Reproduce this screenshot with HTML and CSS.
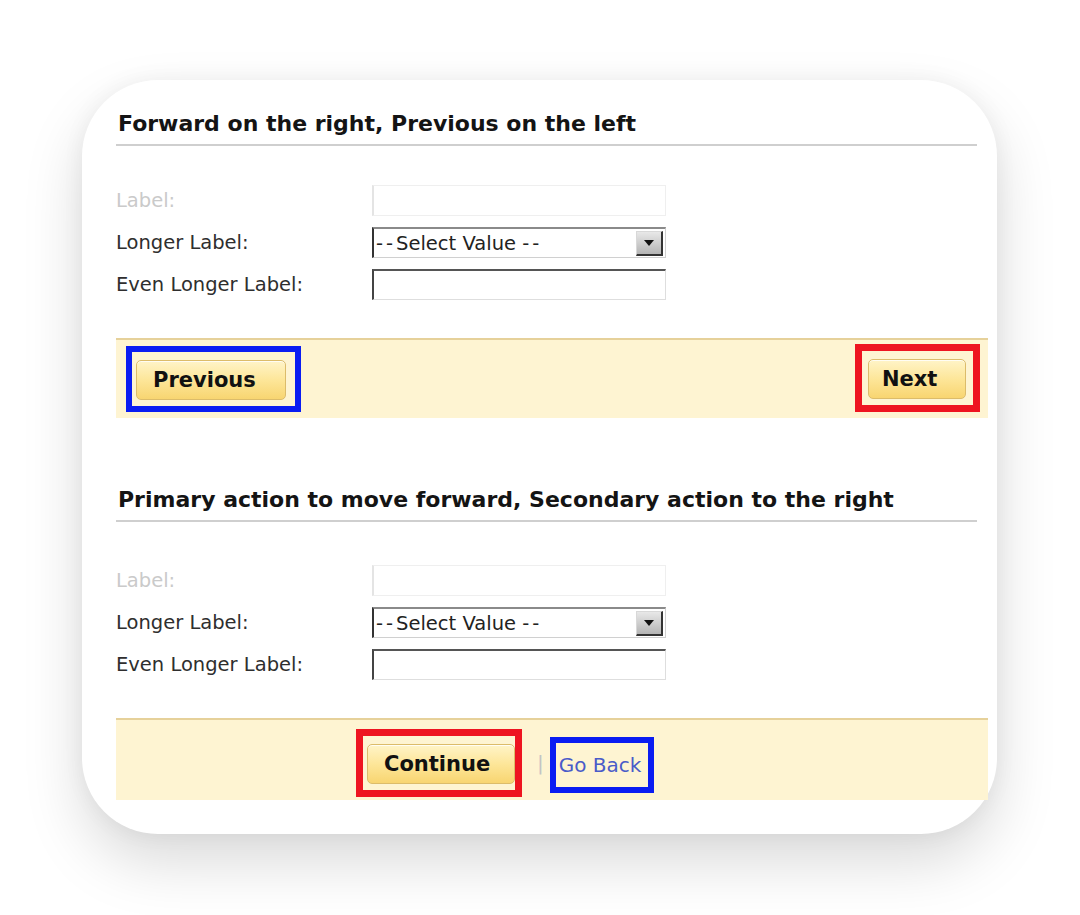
FILE: index.html
```html
<!DOCTYPE html>
<html lang="en">
<head>
<meta charset="utf-8">
<title>Button placement</title>
<link rel="stylesheet" href="styles.css">
</head>
<body>
<div class="page">
<div class="card">
  <section class="section">
    <h2 class="heading">Forward on the right, Previous on the left</h2>
    <div class="form form-first">
      <div class="row">
        <span class="label label-disabled">Label:</span>
        <span class="input input-disabled"></span>
      </div>
      <div class="row">
        <span class="label">Longer Label:</span>
        <span class="select"><span class="select-text"><span class="dash">--</span>Select Value <span class="dash">--</span></span><span class="select-arrow"><svg width="12" height="8" viewBox="0 0 12 8"><path d="M1 1 L11 1 L6 7 Z" fill="#111"/></svg></span></span>
      </div>
      <div class="row">
        <span class="label">Even Longer Label:</span>
        <span class="input"></span>
      </div>
    </div>
    <div class="band band-split">
      <span class="mark mark-blue mark-prev"><button class="btn btn-prev">Previous</button></span>
      <span class="mark mark-red mark-next"><button class="btn btn-next">Next</button></span>
    </div>
  </section>

  <section class="section section-second">
    <h2 class="heading">Primary action to move forward, Secondary action to the right</h2>
    <div class="form form-second">
      <div class="row">
        <span class="label label-disabled">Label:</span>
        <span class="input input-disabled"></span>
      </div>
      <div class="row">
        <span class="label">Longer Label:</span>
        <span class="select"><span class="select-text"><span class="dash">--</span>Select Value <span class="dash">--</span></span><span class="select-arrow"><svg width="12" height="8" viewBox="0 0 12 8"><path d="M1 1 L11 1 L6 7 Z" fill="#111"/></svg></span></span>
      </div>
      <div class="row">
        <span class="label">Even Longer Label:</span>
        <span class="input"></span>
      </div>
    </div>
    <div class="band band-inline">
      <span class="mark mark-red mark-continue"><button class="btn btn-continue">Continue</button></span>
      <span class="sep">|</span>
      <span class="mark mark-blue mark-back"><a class="link" href="#">Go Back</a></span>
    </div>
  </section>
</div>
</div>
</body>
</html>
```

FILE: styles.css
```css
html, body {
  margin: 0;
  padding: 0;
  background: #ffffff;
}

body {
  font-family: "DejaVu Sans", Verdana, sans-serif;
  color: #222;
}

.page {
  min-height: 915px;
  box-sizing: border-box;
  padding: 80px 0 80px 82px;
}

.card {
  width: 915px;
  padding: 31px 9px 34px 34px;
  box-sizing: border-box;
  background: #fff;
  border-radius: 76px;
  box-shadow: 0 28px 60px rgba(0, 0, 0, 0.15), 0 0 22px rgba(0, 0, 0, 0.05);
}

.heading {
  margin: 0 11px 0 0;
  padding: 0 0 7px 2px;
  font-size: 22px;
  line-height: 26px;
  font-weight: bold;
  color: #141414;
  border-bottom: 2px solid #cfcfcf;
}

.section-second {
  margin-top: 69px;
}

.form {
  display: flex;
  flex-direction: column;
  gap: 11px;
}

.form-first {
  margin-top: 39px;
}

.form-second {
  margin-top: 43px;
}

.row {
  display: flex;
  align-items: center;
  height: 31px;
}

.label {
  width: 256px;
  flex: none;
  font-size: 19.5px;
  color: #2e2e2e;
}

.label-disabled {
  color: #cacaca;
}

.input {
  width: 294px;
  height: 31px;
  box-sizing: border-box;
  background: #fff;
  border-top: 2px solid #555;
  border-left: 2px solid #444;
  border-right: 1px solid #dedede;
  border-bottom: 1px solid #dedede;
}

.input-disabled {
  border: 1px solid #efefef;
  border-left: 2px solid #e4e4e4;
}

.select {
  width: 294px;
  height: 31px;
  box-sizing: border-box;
  display: flex;
  align-items: center;
  justify-content: space-between;
  border-top: 2px solid #8a8a8a;
  border-left: 2px solid #333;
  border-right: 1px solid #d0d0d0;
  border-bottom: 1px solid #d0d0d0;
  padding: 0 2px 0 2px;
}

.select-text {
  font-size: 19.5px;
  color: #222;
}

.dash {
  letter-spacing: 3px;
}

.select-arrow {
  width: 27px;
  height: 25px;
  box-sizing: border-box;
  display: flex;
  align-items: center;
  justify-content: center;
  background: linear-gradient(#e8e8e8, #b4b4b4);
  border-top: 1px solid #d8d8d8;
  border-left: 1px solid #d8d8d8;
  border-right: 2px solid #333;
  border-bottom: 2px solid #333;
}

.band {
  margin-top: 38px;
  background: #fef4d2;
  border-top: 2px solid #e6d19a;
  display: flex;
  align-items: center;
}

.band-split {
  height: 80px;
  box-sizing: border-box;
  justify-content: space-between;
  padding: 0 8px 0 10px;
}

.band-inline {
  height: 82px;
  box-sizing: border-box;
  padding: 6px 0 0 240px;
}

.mark {
  display: inline-flex;
  align-items: center;
  box-sizing: border-box;
}

.mark-blue {
  border: 6px solid #0a1cf2;
}

.mark-red {
  border: 7px solid #ee1420;
}

.mark-prev {
  width: 175px;
  height: 66px;
  padding: 2px 0 0 4px;
}

.mark-next {
  width: 125px;
  height: 68px;
  padding: 2px 0 0 6px;
  margin-bottom: 2px;
}

.mark-continue {
  width: 166px;
  height: 68px;
  padding: 2px 0 0 4px;
}

.mark-back {
  width: 104px;
  height: 56px;
  padding: 0 0 0 3px;
  margin-top: 4px;
}

.btn {
  height: 40px;
  box-sizing: border-box;
  padding: 0 24px 0 16px;
  font-family: "DejaVu Sans", Verdana, sans-serif;
  font-size: 21px;
  font-weight: bold;
  color: #111;
  background: linear-gradient(#fff4c8 0%, #fde699 50%, #f8d571 100%);
  border: 1px solid #dcbc6a;
  border-radius: 5px;
  box-shadow: inset 0 1px 0 rgba(255, 255, 255, 0.8);
  text-align: left;
}

.btn-prev {
  width: 150px;
}

.btn-next {
  width: 98px;
  padding-left: 13px;
}

.btn-continue {
  width: 149px;
}

.sep {
  margin: 0 6px 0 15px;
  font-size: 20px;
  color: #c4c4c4;
}

.link {
  font-size: 20px;
  color: #4a5bc9;
  text-decoration: none;
}
```
